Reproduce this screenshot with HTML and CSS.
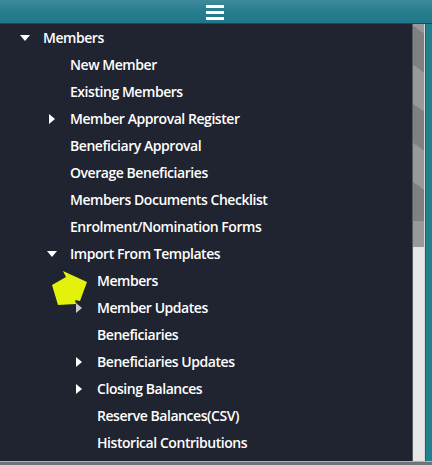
FILE: index.html
```html
<!DOCTYPE html>
<html>
<head>
<meta charset="utf-8">
<link rel="stylesheet" href="styles.css">
</head>
<body>
<div class="frame">
  <header class="topbar">
    <svg class="burger" width="18" height="16" viewBox="0 0 18 16"><rect x="0" y="1" width="18" height="3" fill="#fff"/><rect x="0" y="7" width="18" height="3" fill="#fff"/><rect x="0" y="13" width="18" height="3" fill="#fff"/></svg>
  </header>
  <div class="main">
    <nav class="menu">
      <ul class="tree">
        <li><div class="row"><span class="caret down"></span>Members</div>
          <ul class="tree sub">
            <li><div class="row"><span class="caret"></span>New Member</div></li>
            <li><div class="row"><span class="caret"></span>Existing Members</div></li>
            <li><div class="row"><span class="caret right"></span>Member Approval Register</div></li>
            <li><div class="row"><span class="caret"></span>Beneficiary Approval</div></li>
            <li><div class="row"><span class="caret"></span>Overage Beneficiaries</div></li>
            <li><div class="row"><span class="caret"></span>Members Documents Checklist</div></li>
            <li><div class="row"><span class="caret"></span>Enrolment/Nomination Forms</div></li>
            <li><div class="row"><span class="caret down"></span>Import From Templates</div>
              <ul class="tree sub">
                <li><div class="row"><span class="caret"></span>Members</div></li>
                <li><div class="row"><span class="caret right dim"></span>Member Updates</div></li>
                <li><div class="row"><span class="caret"></span>Beneficiaries</div></li>
                <li><div class="row"><span class="caret right"></span>Beneficiaries Updates</div></li>
                <li><div class="row"><span class="caret right"></span>Closing Balances</div></li>
                <li><div class="row"><span class="caret"></span>Reserve Balances(CSV)</div></li>
                <li><div class="row"><span class="caret"></span>Historical Contributions</div></li>
              </ul>
            </li>
          </ul>
        </li>
      </ul>
      <svg class="pointer" width="40" height="40" viewBox="0 0 40 40"><polygon points="13,1 37,12 30,31 25,30 26,34 8,35 2,15 16,7" fill="#e2f20a"/></svg>
    </nav>
    <div class="scrollbar"><div class="thumb"></div></div>
    <div class="edge"></div>
  </div>
  <div class="bottombar"></div>
</div>
</body>
</html>
```
FILE: styles.css
```css
html, body {
  margin: 0;
  padding: 0;
  background: #22808f;
}
.frame {
  width: 432px;
  height: 465px;
  display: flex;
  flex-direction: column;
  overflow: hidden;
  font-family: "Open Sans", "Noto Sans", sans-serif;
}
.topbar {
  height: 23px;
  flex: none;
  display: flex;
  align-items: center;
  justify-content: center;
  background: linear-gradient(#3d8c9c, #247c8d 55%, #1f7789);
  border-bottom: 1px solid #164f5b;
  padding-right: 6px;
}
.burger { display: block; margin-left: 4px; }
.main {
  flex: 1;
  display: flex;
  min-height: 0;
}
.menu {
  flex: 1;
  background: #1f2430;
  position: relative;
  overflow: hidden;
}
.tree {
  list-style: none;
  margin: 0;
  padding: 0 0 0 20px;
}
.tree.sub { padding-left: 27px; }
.row {
  height: 27px;
  display: flex;
  align-items: center;
  color: #fff;
  font-size: 14px;
  font-weight: 600;
  white-space: nowrap;
  letter-spacing: -0.45px;
}
.caret {
  width: 23px;
  flex: none;
  height: 10px;
  position: relative;
}
.caret.down::before {
  content: "";
  position: absolute;
  left: 0;
  top: 2px;
  border-left: 5px solid transparent;
  border-right: 5px solid transparent;
  border-top: 6px solid #fff;
}
.caret.right::before {
  content: "";
  position: absolute;
  left: 2px;
  top: 0;
  border-top: 5px solid transparent;
  border-bottom: 5px solid transparent;
  border-left: 6px solid #fff;
}
.caret.dim::before { border-left-color: #c9c9c9; }
.pointer {
  position: absolute;
  left: 50px;
  top: 246px;
}
.scrollbar {
  width: 11px;
  flex: none;
  background: #e6e6e6;
  border-left: 1px solid #555b63;
  border-right: 1px solid #d8d8d8;
}
.thumb {
  height: 223px;
  background: repeating-linear-gradient(35deg, #808080 0 32px, #999 32px 64px);
  background-position: 0 -26px;
}
.edge {
  width: 6px;
  flex: none;
  background: #22808f;
  border-left: 1px solid #1a6470;
}
.bottombar {
  height: 3px;
  flex: none;
  background: #6f7478;
  border-top: 1px solid #aeb3b8;
}
```
